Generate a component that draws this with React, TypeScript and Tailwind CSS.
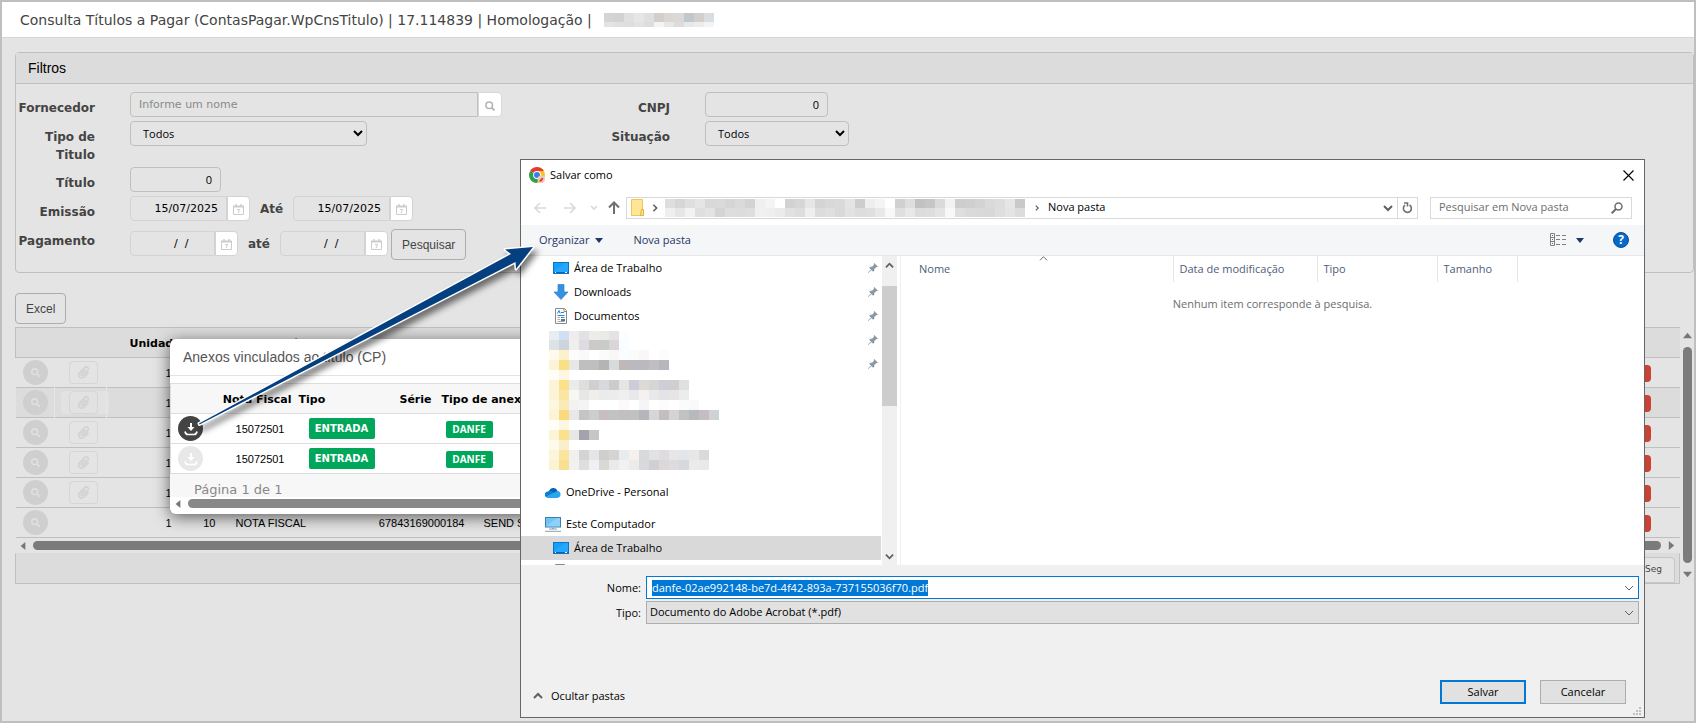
import { useEffect, useRef, useState } from "react";
import { FaSearch, FaPaperclip } from "react-icons/fa";

type Titulo = {
  id: number;
  unidade: number;
  numero: string;
  tipo: string;
  cnpj: string;
  nome: string;
  anexo: boolean;
  selected?: boolean;
};

const titulos: Titulo[] = [
  { id: 1, unidade: 1, numero: "", tipo: "", cnpj: "", nome: "", anexo: true },
  { id: 2, unidade: 1, numero: "", tipo: "", cnpj: "", nome: "", anexo: true, selected: true },
  { id: 3, unidade: 1, numero: "", tipo: "", cnpj: "", nome: "", anexo: true },
  { id: 4, unidade: 1, numero: "", tipo: "", cnpj: "", nome: "", anexo: true },
  { id: 5, unidade: 1, numero: "", tipo: "", cnpj: "", nome: "", anexo: true },
  {
    id: 6,
    unidade: 1,
    numero: "10",
    tipo: "NOTA FISCAL",
    cnpj: "67843169000184",
    nome: "SEND S",
    anexo: false,
  },
];

const anexos = [
  { id: 1, nota: "15072501", tipo: "ENTRADA", anexo: "DANFE", active: true },
  { id: 2, nota: "15072501", tipo: "ENTRADA", anexo: "DANFE", active: false },
];

// Masked blocks, one string per row, colours separated by spaces ("-" is empty)
const titleMask = [
  "d4d4d4 d2d2d2 dfe0e2 e6e6e6 e0dfdd d3ceca d9d6d3 dbd9d8 c2c7cb d0cfcd d9dddf",
  "e5e3e1 e2e0de dedede e2e2e3 dcdddf f5f4f1 e6e8e8 dfdbda e6e9ea ececec f4f4f4",
];

const pathMask = [
  "dedede d6d6d6 dfdfdf e5e5e5 d9d9d9 dadada d5d5d5 dadada d3d3d3 efefef f4f4f4 ffffff d2d2d2 d6d6d6 e6e6e6 d4d4d4 d8d8d8 dadada e4e4e4 cdcdcd eeeeee f4f4f4 ffffff d0d0d0 dedede c2c2c2 c6c6c6 dadada f2f2f2 cdcdcd cfcfcf d3d3d3 dadada dddddd e6e6e6 c9c9c9",
  "efefef e6e6e6 f2f2f2 dfdfdf e3e3e3 d4d4d4 dddddd dcdcdc dedede f0f0f0 efefef ebebeb e1e1e1 dddddd efefef dcdcdc dfdfdf d9d9d9 e2e2e2 dddddd dfdfdf e8e8e8 f8f8f8 dfdfdf e8e8e8 dcdcdc dedede e4e4e4 f8f8f8 dedede dadada d9d9d9 d8d8d8 dedede e4e4e4 dcdcdc",
];

const folderMask = [
  "e8ecf3 d1dff6 eeecec e2e1e3 edece9 e9ebe9 e3e3e3 fbfdff",
  "dde2e4 ccd5db f0efee dedce2 cbcac9 cacac9 d9d5d9 f9fdff",
  "fffaec fcf1cc fcfcfc f7f9fb ffffff fbfbfb f9f7f5 f9fdff fbfbfb f8f8f8 - fcfcfc",
  "fcf4d6 fae084 e7e7e7 bfbfbf bfbfbe b5b4b4 d8dadc c0b7b9 b9b9bf bab9be c2bebf b7b6bc",
  "fffdf5 fcf6e3",
  "fcf4d6 fbe18c ecebeb dfdedd d2cfd0 d8d9de cdcbcd e5e5e1 cdccd8 ddd9d5 d6d6d5 cfced6 d2cecf dfe1e1",
  "fcf4d6 fae5a3 f7f8f6 e7e7e7 f0efed ebebeb ececec efefef e9e9eb f3f2f0 e8e9eb e4e4e6 e6e6e6 ececee",
  "fdf7df fbeab5 f3f2f3 f4f4f5 ffffff ffffff ffffff fbf9fb ffffff f5f5f5 ffffff fcfcfc ffffff fbfbfb f9f9f9",
  "fcf4d6 fada7c e9e8e9 c8c4c5 cbcdcf c6bec2 c0c2c4 c3bfbf c0c1c3 b3b7bb d7d5d6 c2bfbe d5d4d2 c0c3c5 b9b8bc c6bdc1 cfd2d5",
  "fffdf5 fdf6e0",
  "fcf4d6 fbe18c e7e7e5 a5a2ad c6c6c6",
  "fefaea faefca",
  "fdf5da fbe49d f0f0ef d4d4d4 e5e5e5 cfcfce d7d3d3 e8ecef f7f0ee d7d9dd e2e2e3 dfdcdf e6e5e7 e3e6e9 e7e7e5 dad9dc",
  "fcf3d4 f9df92 f1f1f1 e0dedd edf1f5 dad8d6 e9eaed f0f1f0 edeaea d7d9da cfd0d6 dcd8da dfdadb d7d8dd ebebeb e9e9e9",
];

function Mask({ rows, cell }: { rows: string[]; cell: string }) {
  return (
    <div aria-hidden="true">
      {rows.map((row, i) => (
        <div key={i} className={`flex ${cell}`}>
          {row.split(" ").map((color, j) => (
            <span
              key={j}
              className="h-full w-[10px]"
              style={{ backgroundColor: color === "-" ? "transparent" : `#${color}` }}
            />
          ))}
        </div>
      ))}
    </div>
  );
}

function Chevron({ className, dir = "down", stroke = "#606060", width = 2 }: {
  className?: string;
  dir?: "up" | "down" | "right";
  stroke?: string;
  width?: number;
}) {
  const d = { up: "M1 7 5 3 9 7", down: "M1 3 5 7 9 3", right: "M3 1 7 5 3 9" }[dir];
  return (
    <svg viewBox="0 0 10 10" className={className} fill="none" stroke={stroke} strokeWidth={width}>
      <path d={d} />
    </svg>
  );
}

function Triangle({ dir, className }: { dir: "up" | "down" | "left" | "right"; className?: string }) {
  const points = {
    up: "0,8 10,8 5,2",
    down: "0,2 10,2 5,8",
    left: "8,0 8,10 2,5",
    right: "2,0 2,10 8,5",
  }[dir];
  return (
    <svg viewBox="0 0 10 10" className={className} fill="currentColor">
      <polygon points={points} />
    </svg>
  );
}

function CalendarIcon() {
  return (
    <svg viewBox="0 0 11 11" className="h-[11px] w-[11px]" fill="none" stroke="#cccccc">
      <path d="M.5 2.5h10v8H.5z" />
      <path d="M0 2.5h11" strokeWidth="2" />
      <path d="M3 0v2M8 0v2" strokeWidth="1.4" />
      <path d="M4 5.5h2.6L5 9" />
    </svg>
  );
}

function DateField({ id, value, width }: { id: string; value: string; width: string }) {
  return (
    <div className="flex h-[25px]">
      <input
        id={id}
        type="text"
        defaultValue={value}
        className={`${width} rounded-l border border-[#d3d3d3] pt-0.5 pr-2 text-right font-['DejaVu_Sans',sans-serif] text-[11px] text-black`}
      />
      <button
        type="button"
        aria-label="Calendário"
        className="flex w-[23px] items-center justify-center rounded-r border border-[#d3d3d3] bg-white pt-0.5"
      >
        <CalendarIcon />
      </button>
    </div>
  );
}

function DesktopIcon() {
  return (
    <svg viewBox="0 0 16 12" className="h-3 w-4">
      <rect x=".5" y=".5" width="15" height="11" fill="#14a0fa" stroke="#0b74c4" />
      <path d="M1 9 12 1h3v9H1z" fill="#39aefb" opacity=".5" />
      <path d="M1 10.500h14" stroke="#0b64aa" />
      <path d="M2 10.500h1M12 10.500h2" stroke="#ffffff" />
    </svg>
  );
}

function DownloadsIcon() {
  return (
    <svg viewBox="0 0 16 16" className="size-4">
      <path d="M5 .5h6V8h4L8 15.500 1 8h4z" fill="#3592e0" stroke="#2b80cc" strokeWidth=".7" />
    </svg>
  );
}

function DocumentIcon() {
  return (
    <svg viewBox="0 0 16 16" className="size-4">
      <path d="M2.500.5h9l2 2v13h-11z" fill="#ffffff" stroke="#8a8a8a" />
      <path d="M11 .5v3h2.500" fill="none" stroke="#8a8a8a" />
      <path d="M4.500 5.500 6 2.500l1.200 3M8 4.500h3M4.500 7.500h7M8 9.500h3.500" fill="none" stroke="#2b87cf" />
      <path d="M4.500 9.500H7M4.500 11.500H7M4.500 13.500h7" fill="none" stroke="#a7a7a7" />
      <path d="M8 11h4v2H8z" fill="#4a7b9d" />
    </svg>
  );
}

function CloudIcon() {
  return (
    <svg viewBox="0 0 16 11" className="h-[11px] w-4">
      <path d="M4 4A4.600 4.600 0 0 1 12.300 3.500L13 8H2z" fill="#0a5fb4" />
      <path d="M3 10.800A3 3 0 0 1 3 4.400 4 4 0 0 1 7 4l6 6.800z" fill="#0e7cd2" />
      <path d="M12.500 4.100a3.400 3.400 0 0 1 .4 6.700H3.200A3 3 0 0 1 1 9.600L8 6z" fill="#28a8ea" />
    </svg>
  );
}

function ComputerIcon() {
  return (
    <svg viewBox="0 0 16 16" className="size-4">
      <rect x=".5" y="1.500" width="15" height="9.500" fill="#6fc3f5" stroke="#3f7ea8" />
      <path d="M1 10 12 2h3v8.500H1z" fill="#a2dafa" opacity=".6" />
      <path d="M7 11.500h2v1.500H7z" fill="#9fb2bd" />
      <path d="M4 13h8M0 15.300h16" stroke="#8aa1ad" />
    </svg>
  );
}

function PinIcon() {
  return (
    <svg viewBox="0 0 10 10" className="size-[10px] shrink-0" fill="#8b97a1">
      <path d="M6.200 0 10 3.700 8.900 4.300 8.300 4 6.300 6 6.200 8.100 5.200 8.700 3.400 6.900.6 9.800 0 10 .2 9.300 3 6.500 1.200 4.700 2 3.800 4.100 3.700 6 1.700 5.700 1z" />
    </svg>
  );
}

function ChromeIcon() {
  return (
    <svg viewBox="0 0 16 16" className="size-4">
      <path d="M8 8 1.100 4A8 8 0 0 1 14.900 4z" fill="#e33b2e" />
      <path d="M8 8h-.2L1.100 4A8 8 0 0 0 8 16l3.500-6z" fill="#2f9e4f" />
      <path d="M8 16A8 8 0 0 0 14.900 4H8l3.500 6z" fill="#fcc31e" />
      <circle cx="8" cy="8" r="3.900" fill="#ffffff" />
      <circle cx="8" cy="8" r="3" fill="#3b7ded" />
      <circle cx="12.300" cy="12.300" r="3.700" fill="#f3c9bd" />
      <path d="m10 14 3-3.500 1.500 1-2.500 3.500z" fill="#d4472c" />
    </svg>
  );
}

function DownloadGlyph() {
  return (
    <svg viewBox="0 0 14 14" className="size-[14px]" fill="none" stroke="#ffffff">
      <path d="M7 1v5" strokeWidth="2" />
      <path d="M3.500 5h7L7 9z" fill="#ffffff" stroke="none" />
      <path d="M1 9.500c.5 2.500 2 3 3 3h6c1 0 2.500-.5 3-3" strokeWidth="1.700" />
    </svg>
  );
}

function Filters() {
  const label = "w-[79px] shrink-0 pt-[7px] text-right text-xs leading-[18px] font-bold text-[#444]";
  const box = "h-[25px] rounded border border-[#bfbfbf] bg-transparent font-['Open_Sans',sans-serif] text-[11px] text-black";

  return (
    <section className="mt-[14px] ml-[13px] rounded border border-[#bfbfbf]">
      <h2 className="border-b border-[#bfbfbf] bg-[#dcdcdc] px-3 font-['Liberation_Sans',sans-serif] text-sm leading-[30px] text-black">
        Filtros
      </h2>
      <form className="pt-2" onSubmit={(e) => e.preventDefault()}>
        <div className="flex h-[29px]">
          <label htmlFor="fornecedor" className={label}>Fornecedor</label>
          <div className="ml-[35px] flex h-[25px] w-[440px]">
            <input
              id="fornecedor"
              type="text"
              placeholder="Informe um nome"
              className="w-[348px] rounded-l border border-[#bfbfbf] px-2 pt-0.5 text-[11px] placeholder:text-[#8a8a8a]"
            />
            <button
              type="button"
              aria-label="Buscar fornecedor"
              className="flex w-6 items-center justify-center rounded-r border border-[#d8d8d8] bg-white text-[#b3b3b3]"
            >
              <svg viewBox="0 0 10 10" className="mt-0.5 size-[10px]" fill="none" stroke="currentColor" strokeWidth="1.500">
                <circle cx="4.200" cy="4.200" r="3.300" />
                <path d="m6.500 6.500 3 3" strokeWidth="1.800" />
              </svg>
            </button>
          </div>
          <label htmlFor="cnpj" className={`${label} ml-[21px]`}>CNPJ</label>
          <input id="cnpj" type="text" defaultValue="0" className={`${box} ml-[35px] w-[123px] pr-2 text-right`} />
        </div>

        <div className="flex h-[46px]">
          <label htmlFor="tipoTitulo" className={label}>Tipo de Titulo</label>
          <div className="ml-[35px] w-[440px]">
            <select id="tipoTitulo" className={`${box} w-[237px] pl-2`}>
              <option>Todos</option>
            </select>
          </div>
          <label htmlFor="situacao" className={`${label} ml-[21px]`}>Situação</label>
          <select id="situacao" className={`${box} ml-[35px] w-36 pl-2`}>
            <option>Todos</option>
          </select>
        </div>

        <div className="flex h-[29px]">
          <label htmlFor="titulo" className={label}>Título</label>
          <input id="titulo" type="text" defaultValue="0" className={`${box} ml-[35px] w-[91px] pr-2 text-right`} />
        </div>

        <div className="flex h-[29px]">
          <label htmlFor="emissaoDe" className={label}>Emissão</label>
          <div className="ml-[35px] flex">
            <DateField id="emissaoDe" value="15/07/2025" width="w-[97px]" />
            <label htmlFor="emissaoAte" className="w-[43px] pt-1 text-center text-xs leading-[18px] font-bold text-[#444]">
              Até
            </label>
            <DateField id="emissaoAte" value="15/07/2025" width="w-[97px]" />
          </div>
        </div>

        <div className="flex h-[47px]">
          <label htmlFor="pagamentoDe" className={label}>Pagamento</label>
          <div className="ml-[35px] flex pt-1.5">
            <DateField id="pagamentoDe" value="/  /     " width="w-[85px]" />
            <label htmlFor="pagamentoAte" className="w-[42px] pt-1 text-center text-xs leading-[18px] font-bold text-[#444]">
              até
            </label>
            <DateField id="pagamentoAte" value="/  /     " width="w-[85px]" />
            <button
              type="submit"
              className="-mt-0.5 ml-[3px] h-[31px] rounded border border-[#adadad] px-[10px] font-['Liberation_Sans',sans-serif] text-xs text-[#444]"
            >
              Pesquisar
            </button>
          </div>
        </div>
      </form>
    </section>
  );
}

function TitulosTable() {
  return (
    <section className="ml-[13px] flex">
      <div className="min-w-0 flex-1">
        <table className="w-full table-fixed border-collapse font-['Liberation_Sans',sans-serif] text-[11px] text-black">
          <colgroup>
            <col className="w-[39px]" />
            <col className="w-[52px]" />
            <col className="w-[67px]" />
            <col className="w-[44px]" />
            <col className="w-[160px]" />
            <col className="w-[91px]" />
            <col />
            <col className="w-[120px]" />
          </colgroup>
          <thead>
            <tr className="h-[30px] border border-r-0 border-[#bfbfbf] bg-[#dcdcdc] font-['DejaVu_Sans',sans-serif] text-[11px] whitespace-nowrap">
              <th></th>
              <th></th>
              <th className="pt-[3px] pl-[23px] text-left">Unidade</th>
              <th></th>
              <th className="pt-[3px] pl-[18px] text-left">Tipo de Título</th>
              <th></th>
              <th></th>
              <th></th>
            </tr>
          </thead>
          <tbody>
            {titulos.map((t) => (
              <tr key={t.id} className={`h-[30px] border-b border-[#bfbfbf] ${t.selected ? "bg-[#dcdcdc]" : ""}`}>
                <td className={t.selected ? "border-r border-[#e6e6e6]" : ""}>
                  <button
                    type="button"
                    aria-label="Visualizar"
                    className="ml-[7px] flex size-[25px] items-center justify-center rounded-full bg-[#cfcfcf] text-[#e2e2e2]"
                  >
                    <FaSearch className="size-[9px]" />
                  </button>
                </td>
                <td className={t.selected ? "border-r border-[#e6e6e6]" : ""}>
                  {t.anexo && (
                    <div className={`ml-[6px] w-12 rounded px-2 ${t.selected ? "bg-[#e2e2e2]" : ""}`}>
                      <button
                        type="button"
                        aria-label="Anexos"
                        className="flex h-[23px] w-[29px] items-center justify-center rounded border border-[#d6d6d6] text-[#d2d2d2]"
                      >
                        <FaPaperclip className="size-[13px]" />
                      </button>
                    </div>
                  )}
                </td>
                <td className="pt-0.5 pr-0.5 text-right">{t.unidade}</td>
                <td className="pt-0.5 pr-0.5 text-right">{t.numero}</td>
                <td className="pt-0.5 pl-[18px]">{t.tipo}</td>
                <td className="pt-0.5 pr-1 text-right">{t.cnpj}</td>
                <td className="pt-0.5 pl-[15px]">{t.nome}</td>
                <td className="pt-0.5 pr-[29px] text-right">
                  <span className="inline-block rounded-sm bg-[#c94232] px-2 text-[10px] leading-[17px] font-bold text-[#e4e4e4]">
                    ABERTO
                  </span>
                </td>
              </tr>
            ))}
          </tbody>
        </table>
        <div className="flex h-[15px] items-center gap-[6px] px-[4px] text-[#777]">
          <Triangle dir="left" className="size-2" />
          <div className="h-[9px] flex-1 rounded-full bg-[#7b7b7b]" />
          <Triangle dir="right" className="size-[9px]" />
        </div>
        <div className="flex h-[31px] items-end justify-end border border-[#bfbfbf] border-t-transparent bg-[#dcdcdc] pr-1">
          <button
            type="button"
            className="h-[26px] rounded-t border border-[#c6c6c6] bg-[#e4e4e4] pr-3 pl-4 font-['DejaVu_Sans',sans-serif] text-[9px] text-[#444]"
          >
            Seg
          </button>
        </div>
      </div>
      <div className="flex w-[14px] flex-col items-center gap-[7px] pt-1 pb-[5px] text-[#777]">
        <Triangle dir="up" className="size-[9px]" />
        <div className="w-[9px] flex-1 rounded-full bg-[#7b7b7b]" />
        <Triangle dir="down" className="size-[9px]" />
      </div>
    </section>
  );
}

function AnexosModal() {
  return (
    <div
      role="dialog"
      aria-label="Anexos vinculados"
      className="absolute top-[337px] left-[168px] h-[175px] w-[700px] overflow-hidden rounded-md bg-white shadow-[0_3px_16px_rgba(0,0,0,0.6)]"
    >
      <h3 className="h-[37px] border-b border-[#e3e3e3] pl-[13px] font-['Liberation_Sans',sans-serif] text-sm leading-9 text-[#555]">
        Anexos vinculados ao título (CP)
      </h3>
      <div className="mt-[7px] h-[113px]">
        <table className="w-full table-fixed border-collapse border-x border-[#ddd] font-['Liberation_Sans',sans-serif] text-[11px] text-black">
          <colgroup>
            <col className="w-[38px]" />
            <col className="w-[83px]" />
            <col className="w-[101px]" />
            <col className="w-[39px]" />
            <col />
          </colgroup>
          <thead>
            <tr className="h-[30px] border-y border-[#ddd] bg-[#f7f7f7] font-['DejaVu_Sans',sans-serif] text-[11px] whitespace-nowrap">
              <th></th>
              <th className="pt-[3px]"><span className="float-right">Nota Fiscal</span></th>
              <th className="pt-[3px] pl-[7px] text-left">Tipo</th>
              <th className="pt-[3px]"><span className="float-right">Série</span></th>
              <th className="pt-[3px] pl-[10px] text-left">Tipo de anexo</th>
            </tr>
          </thead>
          <tbody>
            {anexos.map((a) => (
              <tr key={a.id} className="h-[30px] border-b border-[#ddd]">
                <td>
                  <button
                    type="button"
                    aria-label="Baixar anexo"
                    className={`ml-[7px] flex size-[25px] items-center justify-center rounded-full ${a.active ? "bg-[#444]" : "bg-[#e8e8e8]"}`}
                  >
                    <DownloadGlyph />
                  </button>
                </td>
                <td className="pt-0.5 pr-[7px] text-right">{a.nota}</td>
                <td className="pl-[17px]">
                  <span className="block w-[66px] rounded-[2px] bg-[#00a65a] text-center font-['DejaVu_Sans',sans-serif] text-[10px] leading-[21px] font-bold text-white">
                    {a.tipo}
                  </span>
                </td>
                <td></td>
                <td className="pt-0.5 pl-[14px]">
                  <span className="block w-[47px] rounded-[2px] bg-[#00a65a] text-center font-['Open_Sans',sans-serif] text-[10px] leading-[17px] font-bold text-white">
                    {a.anexo}
                  </span>
                </td>
              </tr>
            ))}
          </tbody>
        </table>
        <p className="bg-[#f7f7f7] pt-2 pl-6 text-[13px] leading-[15px] text-[#888]">Página 1 de 1</p>
      </div>
      <div className="flex h-[15px] items-center gap-[6px] pl-1 text-[#777]">
        <Triangle dir="left" className="size-2" />
        <div className="h-[9px] flex-1 rounded-full bg-[#888]" />
      </div>
    </div>
  );
}

function TreeItem({ icon, text, pinned, root, selected }: {
  icon?: React.ReactNode;
  text?: string;
  pinned?: boolean;
  root?: boolean;
  selected?: boolean;
}) {
  return (
    <li
      className={`flex h-6 items-center justify-between pr-[3px] ${root ? "pl-6" : "pl-8"} ${selected ? "bg-[#d9d9d9]" : ""}`}
    >
      <span className="flex items-center gap-[5px]">
        <span className="flex w-4 justify-center">{icon}</span>
        {text}
      </span>
      {pinned && <PinIcon />}
    </li>
  );
}

function SaveDialog() {
  const nameRef = useRef<HTMLInputElement>(null);
  const [fileName, setFileName] = useState("danfe-02ae992148-be7d-4f42-893a-737155036f70.pdf");

  useEffect(() => {
    nameRef.current?.focus();
    nameRef.current?.select();
  }, []);

  return (
    <div
      role="dialog"
      aria-label="Salvar como"
      className="absolute top-[157px] right-[49px] left-[518px] flex h-[559px] flex-col border border-[#666] bg-white font-['Open_Sans',sans-serif] text-[11px] text-black"
    >
      {/* Title bar */}
      <div className="flex h-[30px] items-center pr-[10px] pl-2">
        <ChromeIcon />
        <span className="ml-[5px] flex-1">Salvar como</span>
        <button type="button" aria-label="Fechar">
          <svg viewBox="0 0 11 11" className="size-[11px]" stroke="#000000" strokeWidth="1.100">
            <path d="m.5.5 10 10M10.500.5l-10 10" />
          </svg>
        </button>
      </div>

      {/* Navigation */}
      <div className="flex h-[35px] items-center pr-3 pl-[13px]">
        <svg viewBox="0 0 76 14" className="mr-[6px] h-[14px] w-[76px]" fill="none" strokeWidth="1.700">
          <path d="M12 7H1M6 2 1 7l5 5M30 7h11M36 2l5 5-5 5" stroke="#dadada" />
          <path d="m57 5 3 3 3-3" stroke="#dadada" />
        </svg>
        <svg viewBox="0 0 12 14" className="mr-[6px] -ml-2 h-[14px] w-3" fill="none" stroke="#707070" strokeWidth="2">
          <path d="M6 13V2M1 6.500 6 1.500l5 5" />
        </svg>
        <div className="flex h-[22px] min-w-0 flex-1 items-center border border-[#d9d9d9]">
          <svg viewBox="0 0 14 17" className="ml-1 h-[17px] w-[14px] shrink-0">
            <path d="M.5.5h11v16H.5z" fill="#ffe596" stroke="#ecc75c" />
            <path d="M10.500 10.500h2v6h-3z" fill="#ffe08a" stroke="#e0b440" />
          </svg>
          <Chevron dir="right" className="mx-[6px] size-2 shrink-0" />
          <div className="w-[360px] shrink-0 overflow-hidden">
            <Mask rows={pathMask} cell="h-[9px]" />
          </div>
          <Chevron dir="right" className="mr-2 ml-[9px] size-[6px] shrink-0" />
          <span className="flex-1 whitespace-nowrap">Nova pasta</span>
          <Chevron className="mr-1 size-[10px]" />
          <button type="button" aria-label="Atualizar" className="flex h-full w-5 items-center justify-center border-l border-[#d9d9d9]">
            <svg viewBox="0 0 11 12" className="h-3 w-[11px]" fill="none" stroke="#707070" strokeWidth="1.600">
              <path d="M3 3.200A4 4 0 1 0 7.500 3" />
              <path d="M2 1h3.500v3.500" />
            </svg>
          </button>
        </div>
        <div className="ml-3 flex h-[22px] w-[202px] items-center border border-[#d9d9d9] pr-2 pl-2">
          <input
            type="text"
            aria-label="Pesquisar em Nova pasta"
            placeholder="Pesquisar em Nova pasta"
            className="min-w-0 flex-1 placeholder:text-[#6d6d6d]"
          />
          <svg viewBox="0 0 12 12" className="size-3" fill="none" stroke="#6d6d6d">
            <circle cx="7.500" cy="4.500" r="3.500" strokeWidth="1.500" />
            <path d="M5 7 .7 11.300" strokeWidth="2" />
          </svg>
        </div>
      </div>

      {/* Toolbar */}
      <div className="flex h-[31px] items-center border-b border-[#e8e8ea] bg-[#f4f6f8] pr-[15px] pl-[18px] text-[#1f3766]">
        <button type="button" className="flex items-center gap-1.5">
          Organizar
          <Triangle dir="down" className="h-[9px] w-2" />
        </button>
        <button type="button" className="ml-[30px] flex-1 text-left">Nova pasta</button>
        <button type="button" aria-label="Exibição" className="flex items-center gap-[9px]">
          <svg viewBox="0 0 17 14" className="h-[14px] w-[17px]" fill="none" stroke="#808080">
            <path d="M.5.5h4v12h-4zM.5 4.500h4M.5 8.500h4" />
            <path d="M6 2.500h4M12 2.500h4M6 6.500h4M12 6.500h4M6 11.500h4M12 11.500h4" />
            <path d="M2 2.500h1M2 10.500h1" stroke="#d04040" />
            <path d="M2 6.500h1" stroke="#4070d0" />
          </svg>
          <Triangle dir="down" className="h-[9px] w-2" />
        </button>
        <button
          type="button"
          aria-label="Ajuda"
          className="ml-[29px] flex size-4 items-center justify-center rounded-full border border-[#0b4f95] bg-[#0668c9] text-xs leading-none font-bold text-white"
        >
          ?
        </button>
      </div>

      {/* Folders and files */}
      <div className="flex h-[309px] overflow-hidden">
        <nav className="w-[360px] shrink-0">
          <ul>
            <TreeItem icon={<DesktopIcon />} text="Área de Trabalho" pinned />
            <TreeItem icon={<DownloadsIcon />} text="Downloads" pinned />
            <TreeItem icon={<DocumentIcon />} text="Documentos" pinned />
            <li className="flex h-[152px] items-start justify-between pt-[3px] pr-[3px] pl-7">
              <Mask rows={folderMask} cell="h-[9px] w-[170px] [&:nth-child(n+2)]:h-[10px]" />
              <span className="flex flex-col gap-[14px] pt-1">
                <PinIcon />
                <PinIcon />
              </span>
            </li>
            <TreeItem root icon={<CloudIcon />} text="OneDrive - Personal" />
          </ul>
          <ul className="pt-2">
            <TreeItem root icon={<ComputerIcon />} text="Este Computador" />
            <TreeItem selected icon={<DesktopIcon />} text="Área de Trabalho" />
            <TreeItem icon={<DocumentIcon />} />
          </ul>
        </nav>
        <div className="ml-px flex w-[15px] shrink-0 flex-col items-center bg-[#f0f0f0] pb-1">
          <Chevron dir="up" className="mt-[5px] mb-[15px] size-[9px] shrink-0" />
          <div className="mt-px h-[120px] w-full bg-[#cdcdcd]" />
          <Chevron dir="down" className="mt-auto size-[9px] shrink-0" />
        </div>
        <div className="ml-[3px] min-w-0 flex-1 border-l border-[#f0f0f0]">
          <table className="w-full table-fixed border-collapse text-[#4c607a]">
            <colgroup>
              <col className="w-[272px]" />
              <col className="w-[144px]" />
              <col className="w-[120px]" />
              <col className="w-[80px]" />
              <col />
            </colgroup>
            <thead>
              <tr className="h-[26px] text-left">
                <th className="relative border-r border-[#e5e5e5] pl-[18px] font-normal">
                  Nome
                  <Chevron dir="up" width={1} className="absolute -top-0.5 left-[138px] size-[9px]" />
                </th>
                <th className="border-r border-[#e5e5e5] pl-[6px] font-normal">Data de modificação</th>
                <th className="border-r border-[#e5e5e5] pl-[6px] font-normal">Tipo</th>
                <th className="border-r border-[#e5e5e5] pl-[6px] font-normal">Tamanho</th>
                <th></th>
              </tr>
            </thead>
            <tbody>
              <tr>
                <td colSpan={5} className="pt-[14px] text-center text-[#6d6d6d]">
                  Nenhum item corresponde à pesquisa.
                </td>
              </tr>
            </tbody>
          </table>
        </div>
      </div>

      {/* File name and buttons */}
      <div className="flex flex-1 flex-col bg-[#f0f0f0] pt-[11px] pr-[5px]">
        <div className="flex h-[25px] items-start">
          <label htmlFor="fileName" className="w-[125px] pr-[5px] text-right leading-[23px]">Nome:</label>
          <div className="flex h-[23px] flex-1 items-center border border-[#0078d7] bg-white pr-1 pl-[5px]">
            <input
              id="fileName"
              ref={nameRef}
              type="text"
              value={fileName}
              onChange={(e) => setFileName(e.target.value)}
              className="h-4 flex-1 leading-4 outline-none selection:bg-[#0078d7] selection:text-white"
            />
            <Chevron width={1} className="size-[10px]" />
          </div>
        </div>
        <div className="flex h-[23px]">
          <label htmlFor="fileType" className="w-[125px] pr-[5px] text-right leading-[23px]">Tipo:</label>
          <div className="grid flex-1 items-center">
            <select
              id="fileType"
              className="col-start-1 row-start-1 h-[23px] appearance-none border border-[#adadad] bg-[#e1e1e1] pl-[3px]"
            >
              <option>Documento do Adobe Acrobat (*.pdf)</option>
            </select>
            <Chevron width={1} className="pointer-events-none col-start-1 row-start-1 mr-[5px] size-[10px] justify-self-end" />
          </div>
        </div>
        <div className="mt-auto flex items-end pb-[13px] pl-3">
          <button type="button" className="flex flex-1 items-center gap-2">
            <Chevron dir="up" className="size-[10px]" />
            Ocultar pastas
          </button>
          <button type="button" className="h-6 w-[86px] border-2 border-[#0078d7] bg-[#e1e1e1]">
            Salvar
          </button>
          <button type="button" className="mr-[13px] ml-[14px] h-6 w-[86px] border border-[#adadad] bg-[#e1e1e1]">
            Cancelar
          </button>
        </div>
        <svg viewBox="0 0 8 8" className="absolute right-[3px] bottom-0.5 size-2" fill="#bfbfbf">
          <path d="M0 6h2v2H0zM3 6h2v2H3zM6 6h2v2H6zM3 3h2v2H3zM6 3h2v2H6zM6 0h2v2H6z" />
        </svg>
      </div>
    </div>
  );
}

export default function App() {
  return (
    <main className="relative min-h-screen overflow-hidden border-2 border-[#bfbfbf] bg-[#e4e4e4] font-['DejaVu_Sans',sans-serif]">
      <header className="flex h-9 items-center gap-3 border-b border-[#d5d5d5] bg-white pl-[18px] text-[#444]">
        <h1 className="text-sm">
          Consulta Títulos a Pagar (ContasPagar.WpCnsTitulo) | 17.114839 | Homologação |
        </h1>
        <Mask rows={titleMask} cell="h-[9px] nth-2:h-[5px]" />
      </header>

      <Filters />

      <button
        type="button"
        className="mt-5 mb-[3px] ml-[13px] block h-[31px] rounded border border-[#adadad] px-[10px] font-['Liberation_Sans',sans-serif] text-xs text-[#444]"
      >
        Excel
      </button>

      <TitulosTable />
      <AnexosModal />
      <SaveDialog />

      {/* Arrow from the download button to the dialog */}
      <svg
        viewBox="0 0 360 200"
        className="pointer-events-none absolute top-[236px] left-[188px] h-[200px] w-[360px] drop-shadow-[3px_5px_3px_rgba(0,0,0,0.55)]"
      >
        <path
          d="M9 185.500 321 16 315 11.500 343 9 326 31 325.500 24 9.500 186.500z"
          fill="#043f80"
          stroke="#ffffff"
          strokeWidth="3"
          strokeLinejoin="round"
          paintOrder="stroke"
        />
      </svg>
    </main>
  );
}
